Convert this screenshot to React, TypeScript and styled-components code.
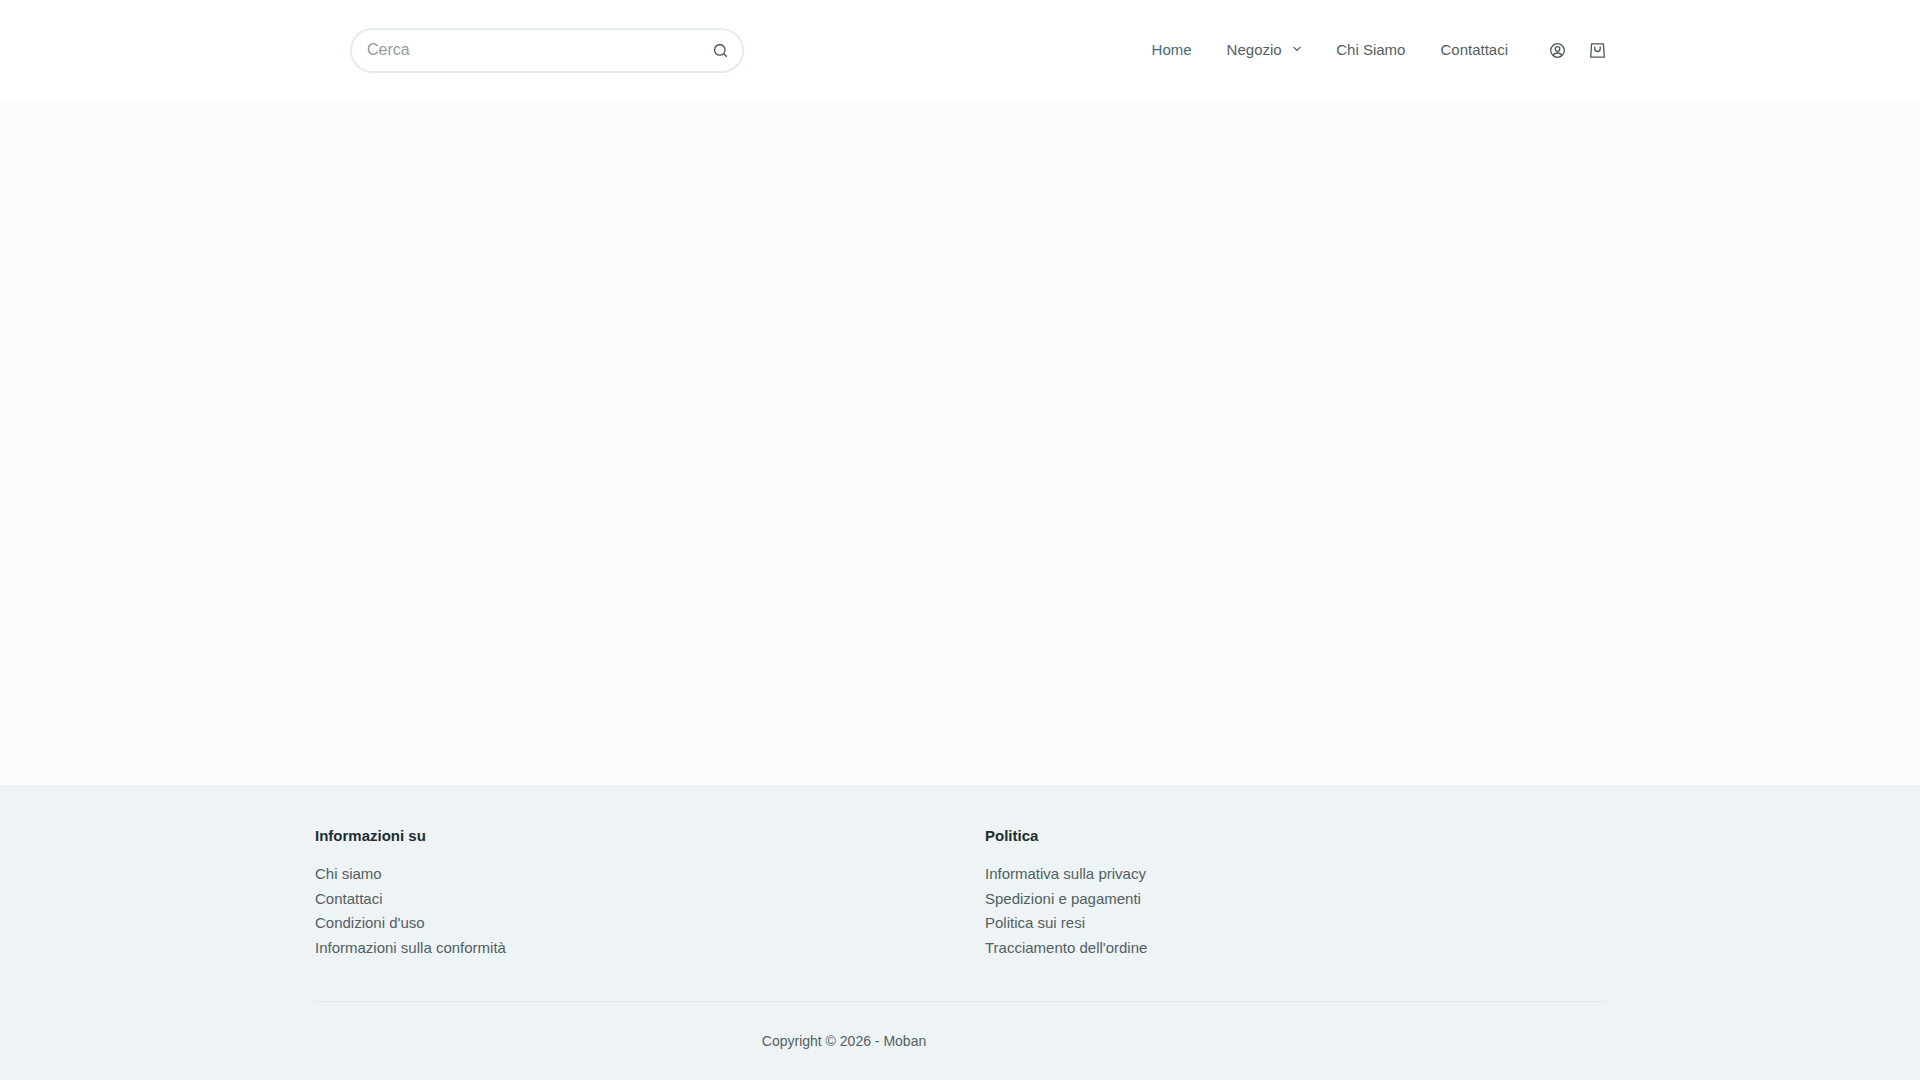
import { createGlobalStyle, styled } from "styled-components"

const GlobalStyle = createGlobalStyle`
  html,
  body {
    margin: 0;
    padding: 0;
  }

  body {
    font-family: "Liberation Sans", Arial, sans-serif;
    font-size: 15px;
    color: #526061;
    background: #fbfcfc;
  }

  a {
    color: inherit;
    text-decoration: none;
  }
`

const menu = [
  { label: "Home", active: true },
  { label: "Negozio", hasChildren: true },
  { label: "Chi Siamo" },
  { label: "Contattaci" }
]

const infoLinks = [
  "Chi siamo",
  "Contattaci",
  "Condizioni d'uso",
  "Informazioni sulla conformità"
]

const policyLinks = [
  "Informativa sulla privacy",
  "Spedizioni e pagamenti",
  "Politica sui resi",
  "Tracciamento dell'ordine"
]

const App = () => {
  return (
    <Page>
      <GlobalStyle />
      <Header>
        <HeaderInner>
          <SearchForm>
            <SearchInput type="search" placeholder="Cerca" />
            <SearchButton type="button" aria-label="Cerca">
              <svg width="13" height="13" viewBox="0 0 15 15" fill="currentColor">
                <path d="M14.8,13.7L12,11c0.9-1.2,1.5-2.7,1.5-4.3c0-3.7-3-6.8-6.8-6.8S0,3,0,6.8s3,6.8,6.8,6.8c1.6,0,3.1-0.6,4.3-1.5l2.8,2.8c0.1,0.1,0.3,0.2,0.5,0.2s0.4-0.1,0.5-0.2C15.1,14.5,15.1,14,14.8,13.7z M1.5,6.8c0-2.9,2.4-5.2,5.2-5.2S12,3.9,12,6.8S9.6,12,6.8,12S1.5,9.6,1.5,6.8z" />
              </svg>
            </SearchButton>
          </SearchForm>
          <Nav>
            {menu.map((item) => (
              <NavLink key={item.label} href="#" $active={item.active}>
                {item.label}
                {item.hasChildren && (
                  <Chevron width="8" height="8" viewBox="0 0 15 15" fill="currentColor">
                    <path d="M2.1,3.2l5.4,5.4l5.4-5.4L15,4.3l-7.5,7.5L0,4.3L2.1,3.2z" />
                  </Chevron>
                )}
              </NavLink>
            ))}
          </Nav>
          <HeaderIcons>
            <IconLink href="#" aria-label="Account">
              <svg width="15" height="15" viewBox="0 0 15 15" fill="none" stroke="currentColor" strokeWidth="1.3">
                <circle cx="7.5" cy="7.5" r="6.8" />
                <circle cx="7.5" cy="6" r="2.3" />
                <path d="M3.2 12.4c.7-1.6 2.4-2.4 4.3-2.4s3.6.8 4.3 2.4" />
              </svg>
            </IconLink>
            <IconLink href="#" aria-label="Carrello">
              <svg width="15" height="15" viewBox="0 0 15 15" fill="none" stroke="currentColor" strokeWidth="1.3">
                <path d="M1.6.8h11.8l.9 13.4H.7z" strokeLinejoin="round" />
                <path d="M4.8 3.6v2.2a2.7 2.7 0 0 0 5.4 0V3.6" />
              </svg>
            </IconLink>
          </HeaderIcons>
        </HeaderInner>
      </Header>
      <Main />
      <Footer>
        <FooterInner>
          <FooterColumns>
            <FooterColumn>
              <FooterTitle>Informazioni su</FooterTitle>
              <FooterList>
                {infoLinks.map((link) => (
                  <li key={link}>
                    <a href="#">{link}</a>
                  </li>
                ))}
              </FooterList>
            </FooterColumn>
            <FooterColumn>
              <FooterTitle>Politica</FooterTitle>
              <FooterList>
                {policyLinks.map((link) => (
                  <li key={link}>
                    <a href="#">{link}</a>
                  </li>
                ))}
              </FooterList>
            </FooterColumn>
          </FooterColumns>
          <FooterBottom>
            <Copyright>Copyright © 2026 - Moban</Copyright>
          </FooterBottom>
        </FooterInner>
      </Footer>
    </Page>
  )
}

const Page = styled.div`
  display: flex;
  flex-direction: column;
  min-height: 1080px;
`

const Header = styled.header`
  height: 100px;
  background: #fff;
`

const HeaderInner = styled.div`
  display: flex;
  align-items: center;
  width: 1290px;
  height: 100%;
  margin: 0 auto;
  padding-left: 35px;
  box-sizing: border-box;
`

const SearchForm = styled.form`
  display: flex;
  align-items: center;
  width: 394px;
  height: 45px;
  box-sizing: border-box;
  border: 2px solid #e3ecef;
  border-radius: 23px;
  padding: 0 15px;
`

const SearchInput = styled.input`
  flex: 1;
  min-width: 0;
  border: 0;
  outline: 0;
  padding: 0 0 1px;
  background: transparent;
  font: 16px "Liberation Sans", Arial, sans-serif;
  color: #526061;
  appearance: none;

  &::placeholder {
    color: #929c9c;
    opacity: 1;
  }
`

const SearchButton = styled.button`
  display: flex;
  border: 0;
  padding: 0;
  background: none;
  color: #4a5859;
`

const Nav = styled.nav`
  display: flex;
  align-items: center;
  gap: 35px;
  margin-left: auto;
  padding-bottom: 2px;
`

const NavLink = styled.a<{ $active?: boolean }>`
  display: flex;
  align-items: center;
  font-size: 15px;
  color: ${({ $active }) => ($active ? "#436d75" : "#526061")};
`

const Chevron = styled.svg`
  margin-left: 11.6px;
`

const HeaderIcons = styled.div`
  display: flex;
  align-items: center;
  gap: 25px;
  margin-left: 42px;
`

const IconLink = styled.a`
  display: flex;
  color: #4a5859;
`

const Main = styled.main`
  flex: 1;
  background: #fbfcfc;
`

const Footer = styled.footer`
  height: 295px;
  background: #eef3f6;
`

const FooterInner = styled.div`
  width: 1290px;
  margin: 0 auto;
`

const FooterColumns = styled.div`
  display: grid;
  grid-template-columns: 1fr 1fr;
  gap: 50px;
  padding: 41px 0 40.2px;
  border-bottom: 1px solid #e2e8eb;
`

const FooterColumn = styled.section``

const FooterTitle = styled.h2`
  margin: 0 0 15.8px;
  font-size: 15px;
  line-height: 20px;
  font-weight: 700;
  color: #1d2e31;
`

const FooterList = styled.ul`
  margin: 0;
  padding: 0;
  list-style: none;
  line-height: 24.75px;
`

const FooterBottom = styled.div`
  width: 1058px;
  padding-top: 28px;
  text-align: center;
`

const Copyright = styled.span`
  font-size: 14px;
  line-height: 22px;
`

export default App
